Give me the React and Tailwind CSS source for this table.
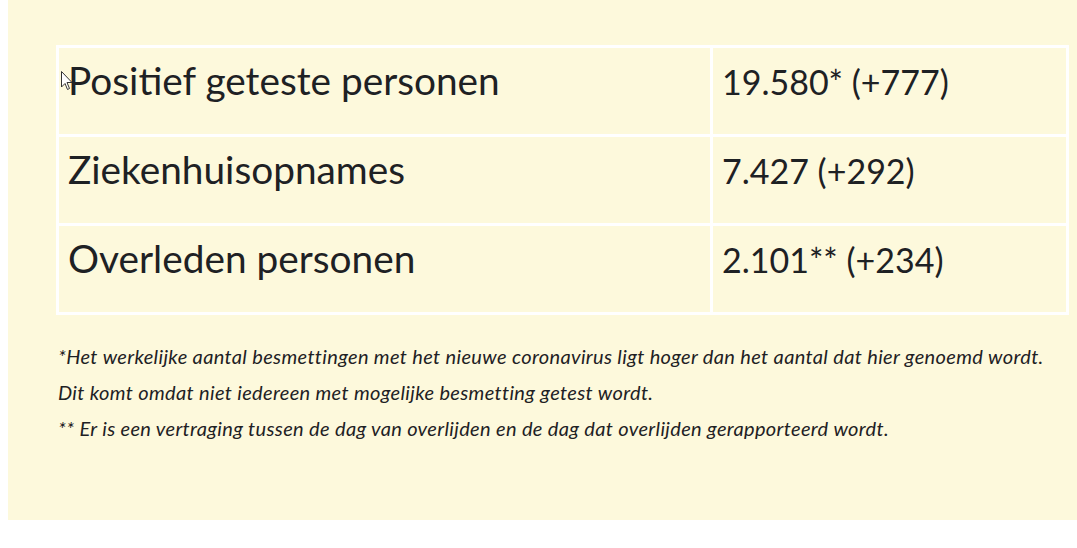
import React from 'react';

const rows = [
  { label: 'Positief geteste personen', value: '19.580* (+777)' },
  { label: 'Ziekenhuisopnames', value: '7.427 (+292)' },
  { label: 'Overleden personen', value: '2.101** (+234)' },
];

const App = () => {
  return (
    <div className="relative w-[1077px] h-[548px] bg-white pl-2 overflow-hidden" style={{ fontFamily: 'Lato, "Noto Sans", sans-serif' }}>
      <div className="h-[520px] bg-[#fdf9dc] pt-[45px] pl-[48px] text-[#1e2124]">
        {/* Tabel met kerncijfers */}
        <table className="w-[1013px] border-collapse border-[3px] border-white">
          <tbody>
            {rows.map((row) => (
              <tr key={row.label} className="h-[89px]">
                <td className="w-[654px] border-[3px] border-white pl-[9px] pt-[13px] align-top text-[38.8px] leading-none">
                  {row.label}
                </td>
                <td className="border-[3px] border-white pl-[9px] pt-[17px] align-top text-[34px] leading-none">
                  {row.value}
                </td>
              </tr>
            ))}
          </tbody>
        </table>

        {/* Voetnoten */}
        <div className="mt-[23px] pl-[2px] italic text-[20px] tracking-[0.35px] leading-[36px]">
          <p>*Het werkelijke aantal besmettingen met het nieuwe coronavirus ligt hoger dan het aantal dat hier genoemd wordt.</p>
          <p>Dit komt omdat niet iedereen met mogelijke besmetting getest wordt.</p>
          <p>** Er is een vertraging tussen de dag van overlijden en de dag dat overlijden gerapporteerd wordt.</p>
        </div>
      </div>

      {/* Muisaanwijzer */}
      <svg className="absolute left-[61px] top-[71px]" width="12" height="20" viewBox="0 0 12 20">
        <path d="M0.5 0.5 L0.5 16 L4 12.5 L6.5 18.5 L8.5 17.5 L6 11.5 L11 11.5 Z" fill="white" stroke="#333" strokeWidth="1" />
      </svg>
    </div>
  );
};

export default App;
